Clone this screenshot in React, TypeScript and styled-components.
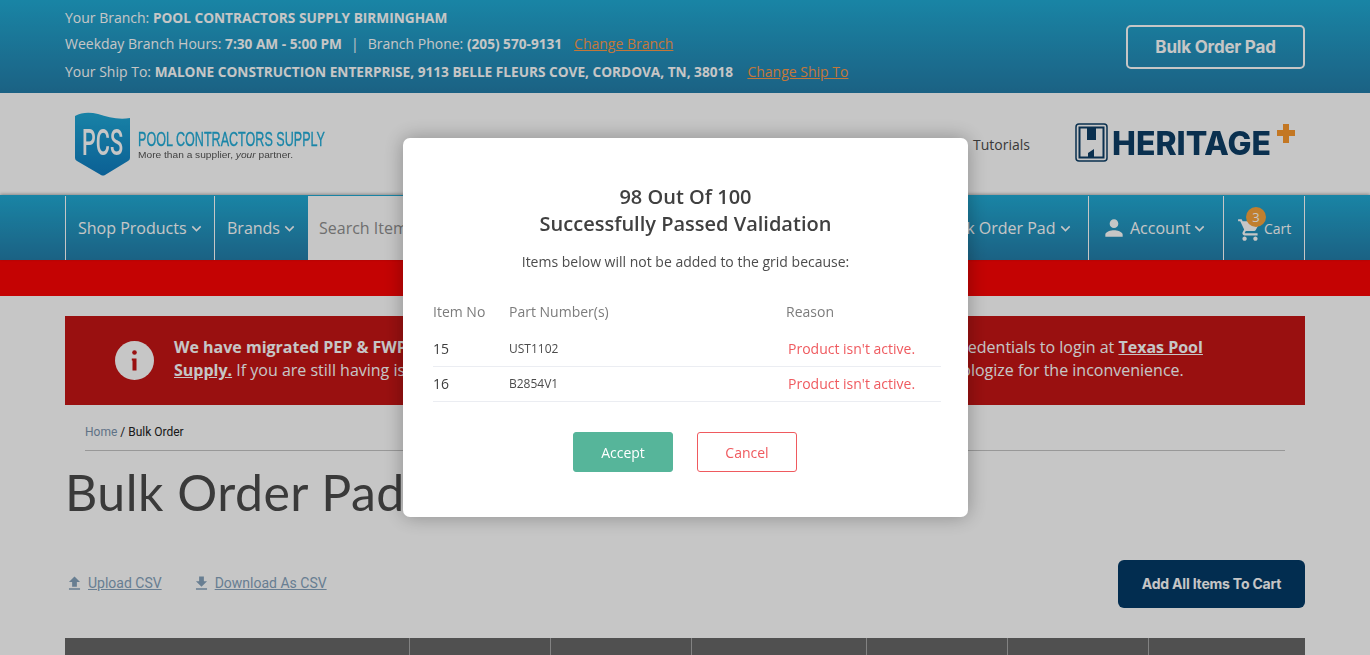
import React from "react";
import styled, { createGlobalStyle } from "styled-components";
import { MdFileDownload, MdFileUpload, MdKeyboardArrowDown, MdPerson, MdShoppingCart } from "react-icons/md";

const Global = createGlobalStyle`
  html, body { margin: 0; padding: 0; height: 100%; overflow: hidden; background: #fff; }
  body { font-family: "Open Sans", "Liberation Sans", sans-serif; color: #4b4b4b; }
  * { box-sizing: border-box; }
`;

const blue = "linear-gradient(180deg, #21abd5 0%, #247eaa 100%)";

const TopBar = styled.div`
  height: 93px;
  background: ${blue};
  padding: 0 65px;
  display: flex;
  align-items: center;
  justify-content: space-between;
  color: #fff;
  font-size: 14px;
  b { font-size: 13.65px; }
`;
const TopLines = styled.div`
  display: flex;
  flex-direction: column;
  margin-top: -3px;
`;
const TopLine = styled.div<{ $h: number }>`
  height: ${(p) => p.$h}px;
  line-height: ${(p) => p.$h}px;
  white-space: pre;
`;
const Pipe = styled.span`
  margin: 0 9px;
`;
const OrangeLink = styled.a<{ $gap: number }>`
  color: #fb9a4a;
  text-decoration: underline;
  margin-left: ${(p) => p.$gap}px;
`;
const OrderPadButton = styled.button`
  width: 179px;
  height: 44px;
  background: transparent;
  border: 2px solid #fff;
  border-radius: 5px;
  color: #fff;
  font: 700 17px "Inter", sans-serif;
  letter-spacing: -0.2px;
`;
const Header = styled.div`
  height: 102px;
  padding: 0 74px;
  display: flex;
  align-items: flex-start;
  justify-content: space-between;
`;
const LogoSvg = styled.svg`
  display: block;
  margin-top: 19px;
  filter: blur(0.35px);
`;
const HeaderRight = styled.div`
  display: flex;
  align-items: flex-start;
`;
const HeaderLink = styled.a`
  font-size: 14px;
  color: #4b4b4b;
  margin: 42px 45px 0 0;
  line-height: 20px;
`;
const HeritageSvg = styled.svg`
  display: block;
  margin-top: 29px;
  filter: blur(0.3px);
`;
const Nav = styled.nav`
  height: 65px;
  padding: 1px 65px 0;
  display: flex;
  background: ${blue};
  box-shadow: 0 -1px 3px rgba(0, 0, 0, 0.3);
  position: relative;
  color: #fff;
  font-size: 16px;
`;
const NavCell = styled.div<{ $w: number; $pad?: number; $last?: boolean }>`
  width: ${(p) => p.$w}px;
  flex: none;
  border-left: 1px solid #fff;
  ${(p) => (p.$last ? "border-right: 1px solid #fff;" : "")}
  padding-left: ${(p) => p.$pad ?? 12}px;
  display: flex;
  align-items: center;
  white-space: nowrap;
  position: relative;
`;
const Chevron = styled(MdKeyboardArrowDown)`
  width: 19px;
  height: 19px;
  margin-top: 1px;
`;
const PersonIcon = styled(MdPerson)`
  width: 26px;
  height: 26px;
  margin-right: 3px;
`;
const CartIcon = styled(MdShoppingCart)`
  width: 26px;
  height: 26px;
  margin: 3px 0 0 1px;
`;
const CartLabel = styled.span`
  font-size: 14px;
  margin-left: 1px;
`;
const Search = styled.input`
  flex: 1;
  min-width: 0;
  border: 0;
  outline: 0;
  background: #fff;
  padding: 0 11px;
  font: 16px "Open Sans", sans-serif;
  &::placeholder { color: #8f8f8f; opacity: 1; }
`;
const Badge = styled.span`
  position: absolute;
  left: 22px;
  top: 11px;
  width: 20px;
  height: 20px;
  border-radius: 50%;
  background: #f8a43d;
  color: #fff;
  font-size: 13px;
  line-height: 20px;
  text-align: center;
`;
const RedBar = styled.div`
  height: 36px;
  background: #fd0505;
`;
const Main = styled.main`
  padding: 20px 65px 0;
`;
const Alert = styled.div`
  height: 89px;
  background: #c61515;
  color: #fff;
  padding: 0 100px 0 50px;
  display: flex;
  align-items: center;
  gap: 20px;
  font-size: 16px;
  line-height: 23px;
`;
const AlertText = styled.div`
  flex: 1;
  margin-top: -3px;
  a { color: #fff; font-weight: 700; text-decoration: underline; }
  b { font-weight: 700; }
`;
const Crumbs = styled.div`
  margin: 0 20px;
  height: 46px;
  padding-top: 20px;
  border-bottom: 1px solid #c4c4c4;
  font: 12px/14px "Roboto", sans-serif;
  color: #222;
  span { color: #7b93ad; }
`;
const Title = styled.h1`
  margin: 11px 0 0 0;
  font: 400 50px/60px "Lato", sans-serif;
  letter-spacing: 0.5px;
  color: #4b4b4b;
`;
const Tools = styled.div`
  margin-top: 38px;
  height: 48px;
  display: flex;
  align-items: center;
  justify-content: space-between;
`;
const ToolLinks = styled.div`
  display: flex;
  gap: 30px;
  margin-top: -2px;
`;
const ToolLink = styled.a`
  display: flex;
  align-items: center;
  gap: 4px;
  font: 14px/16px "Roboto", sans-serif;
  color: #86a3bc;
  u { text-decoration: underline; }
  svg { width: 19px; height: 19px; margin-top: 1px; }
`;
const AddAll = styled.button`
  width: 187px;
  height: 48px;
  border: 0;
  border-radius: 6px;
  background: #033a67;
  color: #fff;
  padding: 0 0 2px;
  font: 700 14px "Inter", sans-serif;
  letter-spacing: -0.2px;
`;
const GridHead = styled.div`
  margin-top: 30px;
  height: 60px;
  background: #676767;
  display: grid;
  grid-template-columns: 345px 141px 141px 175px 141px 141px 156px;
`;
const GridCol = styled.div`
  border-right: 1px solid #a8a8a8;
  &:last-child { border-right: 0; }
`;
const Overlay = styled.div`
  position: fixed;
  inset: 0;
  background: rgba(0, 0, 0, 0.224);
  display: flex;
  justify-content: center;
  align-items: flex-start;
  padding: 138px 0 0 1px;
`;
const Modal = styled.div`
  width: 565px;
  height: 379px;
  background: #fff;
  border-radius: 7px;
  box-shadow: 0 0 20px rgba(0, 0, 0, 0.3);
  padding: 45px 30px 0;
  color: #3d3d3d;
`;
const ModalTitle = styled.h2`
  margin: 0;
  text-align: center;
  font-size: 20px;
  line-height: 27px;
  font-weight: 600;
  color: #404040;
`;
const ModalSub = styled.p`
  margin: 15px 0 0;
  text-align: center;
  font-size: 14px;
  line-height: 20px;
  color: #4c4c4c;
`;
const Table = styled.div`
  margin: 21px -3px 0 0;
`;
const Row = styled.div<{ $h: number; $line?: boolean; $pb: number }>`
  display: grid;
  grid-template-columns: 76px 277px 1fr;
  align-items: center;
  height: ${(p) => p.$h}px;
  padding-bottom: ${(p) => p.$pb}px;
  font-size: 14px;
  ${(p) => (p.$line ? "border-bottom: 1px solid #ebedf2;" : "")}
`;
const Head = styled.span`
  color: #7c7c7c;
`;
const Part = styled.span`
  font-size: 12px;
  color: #4c4c4c;
`;
const Reason = styled.span`
  color: #ef5a5f;
  padding-left: 2px;
`;
const Actions = styled.div`
  margin-top: 30px;
  padding-right: 1px;
  display: flex;
  justify-content: center;
  gap: 24px;
`;
const ModalButton = styled.button<{ $solid?: boolean }>`
  width: 100px;
  height: 40px;
  border-radius: 3px;
  font: 14px "Open Sans", sans-serif;
  border: 1px solid ${(p) => (p.$solid ? "#56b59a" : "#ef5a5f")};
  background: ${(p) => (p.$solid ? "#56b59a" : "#fff")};
  color: ${(p) => (p.$solid ? "#fff" : "#ef5a5f")};
`;

const PcsLogo = () => (
  <LogoSvg width="255" height="66" viewBox="0 0 255 66">
    <defs>
      <linearGradient id="shield" x1="0" y1="0" x2="0" y2="1">
        <stop offset="0" stopColor="#20a8d6" />
        <stop offset="1" stopColor="#0f7cc0" />
      </linearGradient>
    </defs>
    <path d="M1 4 C8 0 16 0 24 2 C34 5 44 8 56 6 V46 Q56 48 54 49 L31 63 Q29 64 27 63 L3 49 Q1 48 1 46 Z" fill="url(#shield)" />
    <text x="8" y="43" fill="#fff" fontFamily="Roboto" fontWeight="500" fontSize="37" textLength="41" lengthAdjust="spacingAndGlyphs">PCS</text>
    <text x="64" y="34" fill="#21acd8" stroke="#21acd8" strokeWidth="0.35" fontFamily="Liberation Sans" fontSize="21" textLength="187" lengthAdjust="spacingAndGlyphs">POOL CONTRACTORS SUPPLY</text>
    <text x="64" y="46" fill="#555" fontFamily="Liberation Sans" fontSize="9" textLength="155" lengthAdjust="spacingAndGlyphs">More than a supplier, <tspan fontStyle="italic">your</tspan> partner.</text>
  </LogoSvg>
);

const HeritageLogo = () => (
  <HeritageSvg width="221" height="42" viewBox="0 0 221 42">
    <rect x="1" y="2" width="31" height="37" rx="3" fill="none" stroke="#0e3f66" strokeWidth="1.5" />
    <rect x="3.5" y="4.5" width="26" height="32" fill="#0e3f66" />
    <path d="M5.5 6.5 H12 V18 H21 V6.5 H27.5 V34.5 H19 V27 L13 31 V34.5 H5.5 Z" fill="#fff" />
    <text x="37" y="32.5" fill="#0e3f66" fontFamily="Inter" fontWeight="800" fontSize="32" textLength="159" lengthAdjust="spacingAndGlyphs">HERITAGE</text>
    <path d="M208 2 H214 V8 H220 V14 H214 V21 H208 V14 H202 V8 H208 Z" fill="#fb9a2e" />
  </HeritageSvg>
);

const InfoIcon = () => (
  <svg width="39" height="39" viewBox="0 0 39 39" style={{ flex: "none" }}>
    <circle cx="19.5" cy="19.5" r="19.5" fill="#fff" />
    <circle cx="19.5" cy="11.5" r="2.3" fill="#c61515" />
    <path d="M16.8 17.5 H21.5 V29.5 H17.5 V19.5 H16.8 Z" fill="#c61515" />
  </svg>
);

export default function App() {
  return (
    <>
      <Global />
      <TopBar>
        <TopLines>
          <TopLine $h={26}>Your Branch: <b>POOL CONTRACTORS SUPPLY BIRMINGHAM</b></TopLine>
          <TopLine $h={26}>Weekday Branch Hours: <b>7:30 AM - 5:00 PM</b><Pipe>|</Pipe>Branch Phone: <b>(205) 570-9131</b><OrangeLink $gap={12}>Change Branch</OrangeLink></TopLine>
          <TopLine $h={29}>Your Ship To: <b>MALONE CONSTRUCTION ENTERPRISE, 9113 BELLE FLEURS COVE, CORDOVA, TN, 38018</b>{"  "}<OrangeLink $gap={7}>Change Ship To</OrangeLink></TopLine>
        </TopLines>
        <OrderPadButton>Bulk Order Pad</OrderPadButton>
      </TopBar>
      <Header>
        <PcsLogo />
        <HeaderRight>
          <HeaderLink>Tutorials</HeaderLink>
          <HeritageLogo />
        </HeaderRight>
      </Header>
      <Nav>
        <NavCell $w={149}>Shop Products<Chevron /></NavCell>
        <NavCell $w={94}>Brands<Chevron /></NavCell>
        <Search placeholder="Search Items" />
        <NavCell $w={163} $pad={16}>Bulk Order Pad<Chevron /></NavCell>
        <NavCell $w={135}>
          <PersonIcon />Account<Chevron />
        </NavCell>
        <NavCell $w={82} $last>
          <CartIcon />
          <Badge>3</Badge>
          <CartLabel>Cart</CartLabel>
        </NavCell>
      </Nav>
      <RedBar />
      <Main>
        <Alert>
          <InfoIcon />
          <AlertText>
            <b>We have migrated PEP &amp; FWP customers to Texas Pool Supply.</b> Please, use your existing PCS account credentials to login at <a>Texas Pool Supply.</a> If you are still having issues, please contact your local branch, for further assistance, today. We apologize for the inconvenience.
          </AlertText>
        </Alert>
        <Crumbs><span>Home</span> / Bulk Order</Crumbs>
        <Title>Bulk Order Pad</Title>
        <Tools>
          <ToolLinks>
            <ToolLink><MdFileUpload /><u>Upload CSV</u></ToolLink>
            <ToolLink><MdFileDownload /><u>Download As CSV</u></ToolLink>
          </ToolLinks>
          <AddAll>Add All Items To Cart</AddAll>
        </Tools>
        <GridHead>
          {Array.from({ length: 7 }, (_, i) => <GridCol key={i} />)}
        </GridHead>
      </Main>
      <Overlay>
        <Modal>
          <ModalTitle>98 Out Of 100<br />Successfully Passed Validation</ModalTitle>
          <ModalSub>Items below will not be added to the grid because:</ModalSub>
          <Table>
            <Row $h={39} $pb={3}><Head>Item No</Head><Head>Part Number(s)</Head><Head>Reason</Head></Row>
            <Row $h={35} $pb={2} $line><span>15</span><Part>UST1102</Part><Reason>Product isn't active.</Reason></Row>
            <Row $h={35} $pb={2} $line><span>16</span><Part>B2854V1</Part><Reason>Product isn't active.</Reason></Row>
          </Table>
          <Actions>
            <ModalButton $solid>Accept</ModalButton>
            <ModalButton>Cancel</ModalButton>
          </Actions>
        </Modal>
      </Overlay>
    </>
  );
}
